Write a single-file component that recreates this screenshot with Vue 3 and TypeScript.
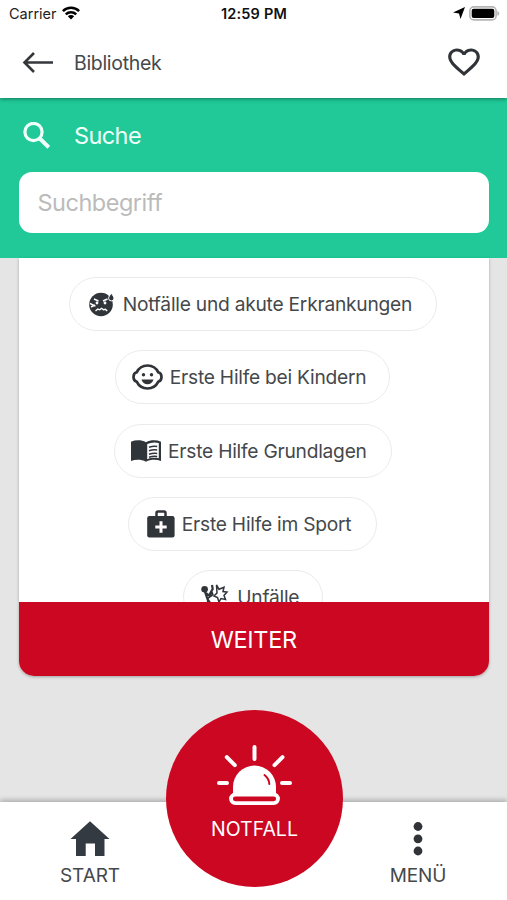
<script setup lang="ts">
interface Topic {
  id: string
  label: string
}

const topics: Topic[] = [
  { id: 'emergency', label: 'Notfälle und akute Erkrankungen' },
  { id: 'children', label: 'Erste Hilfe bei Kindern' },
  { id: 'basics', label: 'Erste Hilfe Grundlagen' },
  { id: 'sport', label: 'Erste Hilfe im Sport' },
  { id: 'accidents', label: 'Unfälle' },
]
</script>

<template>
  <div class="screen">
    <div class="status">
      <div class="status-side">
        <span class="carrier">Carrier</span>
        <svg class="wifi" width="18" height="14" viewBox="0 0 18 14">
          <g fill="none" stroke="#000" stroke-width="2.5">
            <path d="M.9 5.2a11.5 11.5 0 0 1 16.2 0" />
            <path d="M3.8 8.3a7.4 7.4 0 0 1 10.4 0" />
          </g>
          <path d="M9 13.5 5.8 10.3a4.5 4.5 0 0 1 6.4 0z" />
        </svg>
      </div>
      <span class="clock">12:59 PM</span>
      <div class="status-side status-right">
        <svg width="12" height="12" viewBox="0 0 12 12"><path d="M12 0 7.500 12 6 6.500 0 5.600z" /></svg>
        <svg class="battery" width="31" height="15" viewBox="0 0 31 15">
          <rect x=".9" y=".9" width="26.2" height="13" rx="4" fill="#fff" stroke="#b5b5b5" stroke-width="1.6" />
          <rect x="2.7" y="2.7" width="22.6" height="9.4" rx="2" />
          <path d="M28.3 5q2 .7 2 2.4t-2 2.4z" fill="#b5b5b5" />
        </svg>
      </div>
    </div>

    <header class="nav">
      <svg width="32" height="22" viewBox="0 0 32 22" fill="none" stroke="#34383c" stroke-width="2.6">
        <path d="M31 10.500H2M12 1 2.500 10.500l9.500 9.500" />
      </svg>
      <h1>Bibliothek</h1>
      <svg class="heart" width="38" height="36" viewBox="0 0 24 24" fill="#303438" preserveAspectRatio="none">
        <path d="M16.500 3c-1.740 0-3.410.810-4.500 2.090C10.910 3.810 9.240 3 7.500 3 4.420 3 2 5.420 2 8.500c0 3.780 3.400 6.860 8.550 11.540L12 21.350l1.450-1.320C18.600 15.360 22 12.280 22 8.500 22 5.420 19.580 3 16.500 3zm-4.400 15.550-.1.100-.1-.1C7.140 14.240 4 11.390 4 8.500 4 6.500 5.500 5 7.500 5c1.540 0 3.040.990 3.570 2.360h1.870C13.460 5.990 14.960 5 16.500 5c2 0 3.500 1.500 3.500 3.500 0 2.890-3.140 5.740-7.900 10.050z" />
      </svg>
    </header>

    <section class="search">
      <div class="search-head">
        <svg width="27" height="27" viewBox="0 0 27 27" fill="none" stroke="#effffa">
          <circle cx="10.500" cy="10" r="8.600" stroke-width="3.200" />
          <path d="m16.500 16.300 9.300 9" stroke-width="4" />
        </svg>
        <h2>Suche</h2>
      </div>
      <input type="text" placeholder="Suchbegriff" aria-label="Suchbegriff" />
    </section>

    <main class="content">
      <div class="card">
        <div class="topics">
          <button v-for="topic in topics" :key="topic.id" class="chip" :class="topic.id">
            <svg v-if="topic.id === 'emergency'" width="26" height="25" viewBox="0 0 26 25">
              <circle cx="12" cy="12.500" r="11.800" fill="#30353a" />
              <path d="M22.300 1.200c1.400 2.200 2.700 3.500 2.700 5a2.700 2.700 0 0 1-5.400 0c0-1.500 1.300-2.800 2.700-5z" fill="#30353a" stroke="#fff" stroke-width="1" />
              <g fill="none" stroke="#fff" stroke-width="1.400">
                <path d="m5 7 4.500 2M18.500 7 14 9M1 11.500l5.500 2.700M2 15l4-2" />
                <path d="m6.500 19 2.300-2 2 .8 1.800-1.500 1.800 1.500 2-.5 1.800 1.800" />
              </g>
              <circle cx="8" cy="11" r="1.400" fill="#fff" /><circle cx="16" cy="11" r="1.400" fill="#fff" />
            </svg>
            <svg v-else-if="topic.id === 'children'" width="31" height="26" viewBox="0 0 31 26">
              <path d="M4.700 8.300C6.800 4 10.800 1.500 15.500 1.500S24.200 4 26.300 8.300c2 .5 3.200 2.300 3.200 4.700s-1.200 4.200-3.200 4.700c-2.100 4.300-6.100 6.800-10.800 6.800S6.800 22 4.700 17.700c-2-.5-3.200-2.300-3.200-4.700s1.200-4.200 3.200-4.700z" fill="none" stroke="#303438" stroke-width="2.700" />
              <g fill="#303438"><circle cx="11.500" cy="10.800" r="1.700" /><circle cx="19.500" cy="10.800" r="1.700" /><path d="M9.500 15.500h12c-.8 3-3.100 4.700-6 4.700s-5.200-1.700-6-4.700z" /></g>
            </svg>
            <svg v-else-if="topic.id === 'basics'" width="30" height="22" viewBox="0 0 30 22">
              <path d="M0 1.700C5-.3 10.500 0 15 2.200 19.500 0 25 -.3 30 1.700v19.200c-5-1.600-10.500-1.500-15 .8-4.500-2.300-10-2.400-15-.8z" fill="#30353a" />
              <path d="M16.200 4c3.800-1.700 7.700-2 11.600-1v15.200c-4-.8-8-.5-11.600 1z" fill="#fff" />
              <path d="M18 7.200c2.600-.9 5.200-1.200 8.200-.8M18 10.700c2.600-.9 5.200-1.200 8.200-.8M18 14.200c2.600-.9 5.200-1.200 8.200-.8M18 17.200c2.600-.9 5.200-1.200 8.200-.8" fill="none" stroke="#30353a" stroke-width="1.500" />
            </svg>
            <svg v-else-if="topic.id === 'sport'" width="28" height="28" viewBox="0 0 28 28">
              <path d="M9.500 7V3q0-1.500 1.500-1.500h6Q18.500 1.500 18.500 3v4" fill="none" stroke="#30353a" stroke-width="2.500" />
              <rect x=".2" y="6" width="27.400" height="21.500" rx="2.200" fill="#30353a" />
              <path d="M14 11.300v11.400M8.300 17h11.400" stroke="#fff" stroke-width="3" />
            </svg>
            <svg v-else width="28" height="28" viewBox="0 0 28 28">
              <circle cx="3.600" cy="6.200" r="3.300" fill="#30353a" />
              <path d="m5 10 3 2.500 2.500-4.500 1.200-2-.7-4M4 9l3 8.500v7M7 15l4.500-3.500-1-3M7 17l5 7" fill="none" stroke="#30353a" stroke-width="2.200" />
              <path d="m15.500 2 2.500 4.200 5-2-1 4.300 4 .5-3 3.500 1.500 4-4.500-1-2 3.500-1.500-4.500-3.500-1.500 3-3z" fill="#fff" stroke="#30353a" stroke-width="1.500" />
            </svg>
            <span>{{ topic.label }}</span>
          </button>
        </div>
        <button class="next">WEITER</button>
      </div>
    </main>

    <nav class="tabs">
      <a class="tab start">
        <svg width="40" height="35" viewBox="0 0 40 35"><path d="M20 .3 39.500 18H34.500v17H25V22.500h-9.300V35H6V18H.5z" fill="#343a42" /></svg>
        <span>START</span>
      </a>
      <a class="tab menu">
        <svg width="10" height="35" viewBox="0 0 10 35" fill="#303438"><circle cx="5" cy="5.500" r="4.400" /><circle cx="5" cy="17.800" r="4.400" /><circle cx="5" cy="30" r="4.400" /></svg>
        <span>MENÜ</span>
      </a>
      <button class="alarm">
        <svg width="77" height="62" viewBox="0 0 77 62">
          <g fill="none" stroke="#fff" stroke-width="4" stroke-linecap="round">
            <path d="M38.500 3v12M10.800 13.200l8 8M66.500 13.200l-8 8M3 39h8M66 39h8" />
            <rect x="15" y="50.500" width="47" height="8.600" rx="4.300" stroke-width="3.800" />
          </g>
          <path d="M17 49.500V43a21.500 21.500 0 0 1 43 0v6.500z" fill="#fff" />
          <path d="M48.500 31q4.500 3.500 4.800 9" fill="none" stroke="#cb0721" stroke-width="2" stroke-linecap="round" />
        </svg>
        <span>NOTFALL</span>
      </button>
    </nav>
  </div>
</template>

<style>
body {
  margin: 0;
  overflow: hidden;
}
</style>

<style scoped>
* {
  box-sizing: border-box;
}
.screen {
  display: flex;
  flex-direction: column;
  width: 507px;
  height: 900px;
  overflow: hidden;
  background: #e5e5e5;
  color: #45484b;
  font-family: Inter, 'Liberation Sans', sans-serif;
}
svg {
  display: block;
  flex: none;
}
button {
  border: 0;
  font: inherit;
  color: inherit;
}
h1,
h2 {
  margin: 0;
  font-weight: 400;
}
.status {
  position: relative;
  display: grid;
  grid-template-columns: 1fr auto 1fr;
  align-items: center;
  height: 28px;
  padding: 0 7px 2px 9px;
  background: #fff;
  color: #222;
  font-size: 14.500px;
  z-index: 2;
}
.status-side {
  display: flex;
  align-items: center;
  gap: 6px;
}
.status-right {
  justify-content: flex-end;
  gap: 4px;
}
.wifi {
  margin: -1px 0 0 -1px;
}
.clock {
  margin-right: 1px;
  color: #111;
  font-size: 14.500px;
  font-weight: 600;
  letter-spacing: 0.200px;
}
.nav {
  position: relative;
  display: flex;
  align-items: center;
  height: 70px;
  padding: 0 24px 0 22px;
  background: #fff;
  box-shadow: 0 1px 4px rgba(0, 0, 0, 0.4);
  z-index: 1;
}
.nav h1 {
  flex: 1;
  margin: -1px 0 0 20px;
  font-size: 19.500px;
  letter-spacing: -0.320px;
}
.nav .heart {
  margin-top: -2px;
}
.search {
  height: 159.500px;
  padding: 23px 18.500px 0 19px;
  background: #20c997;
}
.search-head {
  display: flex;
  align-items: center;
  gap: 24px;
  height: 28px;
  margin-left: 4px;
}
.search h2 {
  color: #effffa;
  font-size: 23.500px;
  letter-spacing: -0.600px;
}
.search input {
  display: block;
  width: 100%;
  height: 61px;
  margin-top: 23px;
  padding: 0 18.500px;
  border: 0;
  border-radius: 13px;
  background: #fff;
  font: 400 23.500px Inter, sans-serif;
  letter-spacing: -0.500px;
}
.search input::placeholder {
  color: #bbb;
}
.content {
  height: 544.500px;
  padding: 0 18.500px 0 19px;
}
.card {
  display: flex;
  flex-direction: column;
  height: 418px;
  overflow: hidden;
  border-radius: 0 0 15px 15px;
  background: #fff;
  box-shadow: 0 1px 3px rgba(0, 0, 0, 0.3);
}
.topics {
  display: flex;
  flex-direction: column;
  align-items: center;
  gap: 19.300px;
  height: 344.500px;
  padding: 19.500px 2px 0 0;
  overflow: hidden;
}
.chip {
  display: flex;
  flex: none;
  align-items: center;
  justify-content: flex-start;
  height: 54px;
  padding: 0;
  border: 1.500px solid #ebebeb;
  border-radius: 27px;
  background: #fff;
  font-size: 19.200px;
  letter-spacing: -0.240px;
  white-space: nowrap;
}
.emergency {
  width: 368px;
  padding-left: 19px;
  gap: 8px;
}
.children {
  width: 275px;
  padding-left: 16px;
  gap: 6.500px;
}
.basics {
  width: 278px;
  padding-left: 16.500px;
  gap: 6.800px;
}
.sport {
  width: 249px;
  padding-left: 17.500px;
  gap: 7px;
}
.accidents {
  width: 140px;
  padding-left: 17px;
  gap: 8.500px;
}
.next {
  height: 73.500px;
  padding: 2px 0 0;
  background: #cb0721;
  color: #fff;
  font-size: 23.500px;
  letter-spacing: -0.300px;
}
.tabs {
  position: relative;
  display: flex;
  justify-content: space-between;
  height: 98px;
  padding: 19px 49px 0 50px;
  background: #fff;
  box-shadow: 0 -2px 5px rgba(0, 0, 0, 0.25);
}
.tab {
  display: flex;
  flex-direction: column;
  align-items: center;
  width: 80px;
  gap: 8px;
  font-size: 19px;
  line-height: 24px;
  letter-spacing: -0.100px;
}
.alarm {
  position: absolute;
  left: 166px;
  top: -92px;
  display: flex;
  flex-direction: column;
  align-items: center;
  width: 177px;
  height: 177px;
  padding: 34px 0 0;
  border-radius: 50%;
  background: #cb0721;
  color: #fff;
  font-size: 19.500px;
  line-height: 24px;
}
.alarm span {
  margin-top: 11px;
}
</style>
